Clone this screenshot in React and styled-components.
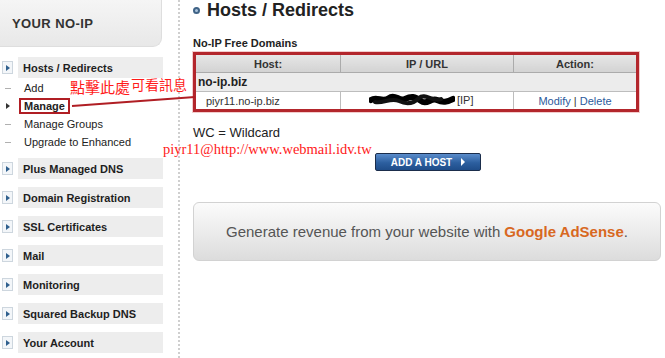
import styled, { createGlobalStyle } from "styled-components";

const GlobalStyle = createGlobalStyle`
  html, body { margin: 0; padding: 0; background: #fff; }
  body {
    font-family: "Liberation Sans", Arial, sans-serif;
    color: #222;
    width: 665px;
    height: 358px;
    overflow: hidden;
    position: relative;
  }
`;

const Page = styled.div`
  display: flex;
  height: 358px;
`;

const Sidebar = styled.div`
  width: 178px;
  border-right: 2px dotted #cfcfcf;
  flex-shrink: 0;
`;

const Logo = styled.div`
  width: 162px;
  height: 47px;
  display: flex;
  align-items: center;
  padding-left: 12px;
  box-sizing: border-box;
  background: linear-gradient(#f5f5f5, #e8e8e8);
  border-right: 1px solid #dedede;
  border-bottom: 1px solid #dedede;
  border-bottom-right-radius: 9px;
  font-size: 13px;
  font-weight: bold;
  letter-spacing: 0.4px;
  color: #333;
`;

const Nav = styled.div`
  margin-top: 10px;
  display: flex;
  flex-direction: column;
`;

const Section = styled.div`
  display: flex;
  align-items: center;
  height: 21px;
  margin-bottom: ${(p) => (p.$open ? "0" : "8px")};
`;

const IconCol = styled.div`
  width: 18px;
  height: 100%;
  display: flex;
  align-items: center;
  flex-shrink: 0;
`;

const ArrowBox = styled.div`
  width: 9px;
  height: 11px;
  margin-left: 2px;
  border: 1px solid #cdd6de;
  background: #f3f6f9;
  display: flex;
  align-items: center;
  justify-content: center;
  &::after {
    content: "";
    border-left: 4px solid #2f5f8d;
    border-top: 3px solid transparent;
    border-bottom: 3px solid transparent;
    margin-left: 1px;
  }
`;

const Bar = styled.div`
  width: 145px;
  height: 21px;
  display: flex;
  align-items: center;
  padding-left: 5px;
  box-sizing: border-box;
  background: #ededed;
  font-size: 11px;
  font-weight: bold;
  color: #1e1e1e;
`;

const SubList = styled.div`
  margin: 1px 0 7px;
`;

const SubItem = styled.div`
  display: flex;
  align-items: center;
  height: 18px;
  font-size: 11px;
  color: #222;
`;

const Dash = styled.div`
  width: 6px;
  height: 1px;
  margin-left: 5px;
  background: #b0b0b0;
`;

const Pointer = styled.div`
  margin-left: 6px;
  border-left: 4px solid #333;
  border-top: 3px solid transparent;
  border-bottom: 3px solid transparent;
`;

const SubLabel = styled.span`
  padding-left: 6px;
  ${(p) =>
    p.$marked &&
    `
    font-weight: bold;
    border: 2px solid #b01e24;
    padding: 0 3px;
    line-height: 12px;
    margin-left: 1px;
  `}
`;

const Main = styled.div`
  flex: 1;
  padding: 0 3px 0 13px;
`;

const Heading = styled.h1`
  margin: 0;
  display: flex;
  align-items: center;
  gap: 7px;
  height: 20px;
  font-size: 18px;
  font-weight: bold;
  color: #222;
`;

const Bullet = styled.span`
  width: 3px;
  height: 3px;
  border-radius: 50%;
  border: 2px solid #3f6386;
  background: #a9c2da;
`;

const Caption = styled.div`
  margin-top: 17px;
  font-size: 11px;
  font-weight: bold;
  color: #222;
`;

const TableFrame = styled.div`
  margin-top: 3px;
  width: 446px;
  box-sizing: border-box;
  border: 3px solid #b3262c;
  box-shadow: 0 0 0 1px #f3cccc;
`;

const Table = styled.table`
  width: 100%;
  border-collapse: collapse;
  font-size: 11px;
`;

const Th = styled.th`
  height: 17px;
  padding: 0;
  background: linear-gradient(#e6e6e6, #d3d3d3);
  border: 1px solid #ababab;
  border-top: none;
  font-weight: bold;
  color: #333;
  text-align: center;
  &:first-child { border-left: none; }
  &:last-child { border-right: none; }
`;

const GroupCell = styled.td`
  height: 18px;
  padding: 0 0 0 2px;
  background: #ececec;
  border-bottom: 1px solid #bdbdbd;
  font-size: 12px;
  font-weight: bold;
`;

const Td = styled.td`
  height: 17px;
  padding: 0 0 0 ${(p) => (p.$pad ? "10px" : "0")};
  border-right: 1px solid #bdbdbd;
  text-align: ${(p) => p.$align || "left"};
  color: #333;
  &:last-child { border-right: none; }
`;

const IpCell = styled.span`
  display: inline-flex;
  align-items: center;
  gap: 2px;
  margin-left: 28px;
`;

const Link = styled.a`
  color: #2b5a9c;
  text-decoration: none;
`;

const Wildcard = styled.div`
  margin-top: 13px;
  font-size: 13px;
  color: #222;
`;

const ButtonRow = styled.div`
  margin-top: 13px;
  padding-left: 182px;
`;

const AddButton = styled.button`
  width: 106px;
  height: 18px;
  display: flex;
  align-items: center;
  justify-content: center;
  gap: 9px;
  padding: 0;
  border: 1px solid #1b2d4b;
  border-radius: 2px;
  background: linear-gradient(#5a8ccb, #2c5f9f 55%, #1f4d89);
  font-family: "Liberation Sans", Arial, sans-serif;
  font-size: 10px;
  font-weight: bold;
  color: #fff;
  &::after {
    content: "";
    border-left: 4px solid #fff;
    border-top: 4px solid transparent;
    border-bottom: 4px solid transparent;
  }
`;

const AdBox = styled.div`
  margin-top: 31px;
  width: 468px;
  height: 59px;
  box-sizing: border-box;
  display: flex;
  align-items: center;
  justify-content: center;
  border: 1px solid #d2d2d2;
  border-radius: 6px;
  background: linear-gradient(#fbfbfb, #ececec 50%, #dcdcdc);
  font-size: 15px;
  color: #555;
`;

const Brand = styled.span`
  color: #d8681f;
  font-weight: bold;
  margin-left: 4px;
`;

const Note = styled.div`
  position: absolute;
  left: ${(p) => p.$x}px;
  top: ${(p) => p.$y}px;
  color: #ff1a1a;
  font-size: ${(p) => p.$size}px;
  font-family: ${(p) =>
    p.$serif
      ? `"Liberation Serif", "Times New Roman", serif`
      : `"Noto Sans CJK TC", "Noto Sans CJK SC", sans-serif`};
  line-height: 1;
  white-space: nowrap;
`;

const Connector = styled.svg`
  position: absolute;
  left: 0;
  top: 0;
  pointer-events: none;
`;

const sections = [
  "Plus Managed DNS",
  "Domain Registration",
  "SSL Certificates",
  "Mail",
  "Monitoring",
  "Squared Backup DNS",
  "Your Account",
];

const Scribble = () => (
  <svg width="86" height="14" viewBox="0 0 86 14">
    <path
      d="M2 7 C8 3 14 10 20 5 S30 9 36 6 S46 3 52 8 S62 4 68 7 S78 9 84 6"
      stroke="#000"
      strokeWidth="6"
      fill="none"
      strokeLinecap="round"
    />
    <path
      d="M6 9 C14 11 22 4 30 8 S44 11 50 5 S64 10 72 6"
      stroke="#111"
      strokeWidth="4"
      fill="none"
      strokeLinecap="round"
    />
  </svg>
);

export default function App() {
  return (
    <>
      <GlobalStyle />
      <Page>
        <Sidebar>
          <Logo>YOUR NO-IP</Logo>
          <Nav>
            <Section $open>
              <IconCol>
                <ArrowBox />
              </IconCol>
              <Bar>Hosts / Redirects</Bar>
            </Section>
            <SubList>
              <SubItem>
                <IconCol>
                  <Dash />
                </IconCol>
                <SubLabel>Add</SubLabel>
              </SubItem>
              <SubItem>
                <IconCol>
                  <Pointer />
                </IconCol>
                <SubLabel $marked>Manage</SubLabel>
              </SubItem>
              <SubItem>
                <IconCol>
                  <Dash />
                </IconCol>
                <SubLabel>Manage Groups</SubLabel>
              </SubItem>
              <SubItem>
                <IconCol>
                  <Dash />
                </IconCol>
                <SubLabel>Upgrade to Enhanced</SubLabel>
              </SubItem>
            </SubList>
            {sections.map((s) => (
              <Section key={s}>
                <IconCol>
                  <ArrowBox />
                </IconCol>
                <Bar>{s}</Bar>
              </Section>
            ))}
          </Nav>
        </Sidebar>
        <Main>
          <Heading>
            <Bullet />
            Hosts / Redirects
          </Heading>
          <Caption>No-IP Free Domains</Caption>
          <TableFrame>
            <Table>
              <thead>
                <tr>
                  <Th style={{ width: 144 }}>Host:</Th>
                  <Th style={{ width: 172 }}>IP / URL</Th>
                  <Th>Action:</Th>
                </tr>
              </thead>
              <tbody>
                <tr>
                  <GroupCell colSpan={3}>no-ip.biz</GroupCell>
                </tr>
                <tr>
                  <Td $pad>piyr11.no-ip.biz</Td>
                  <Td>
                    <IpCell>
                      <Scribble />
                      [IP]
                    </IpCell>
                  </Td>
                  <Td $align="center">
                    <Link href="#">Modify</Link> | <Link href="#">Delete</Link>
                  </Td>
                </tr>
              </tbody>
            </Table>
          </TableFrame>
          <Wildcard>WC = Wildcard</Wildcard>
          <ButtonRow>
            <AddButton>ADD A HOST</AddButton>
          </ButtonRow>
          <AdBox>
            Generate revenue from your website with<Brand>Google AdSense</Brand>.
          </AdBox>
        </Main>
      </Page>
      <Note $x={70} $y={79} $size={15}>點擊此處</Note>
      <Note $x={131} $y={77} $size={14}>可看訊息</Note>
      <Note $x={163} $y={142} $size={14.5} $serif>
        piyr11@http://www.webmail.idv.tw
      </Note>
      <Connector width="665" height="358">
        <line x1="72" y1="106" x2="195" y2="97" stroke="#b01e24" strokeWidth="2" />
      </Connector>
    </>
  );
}
